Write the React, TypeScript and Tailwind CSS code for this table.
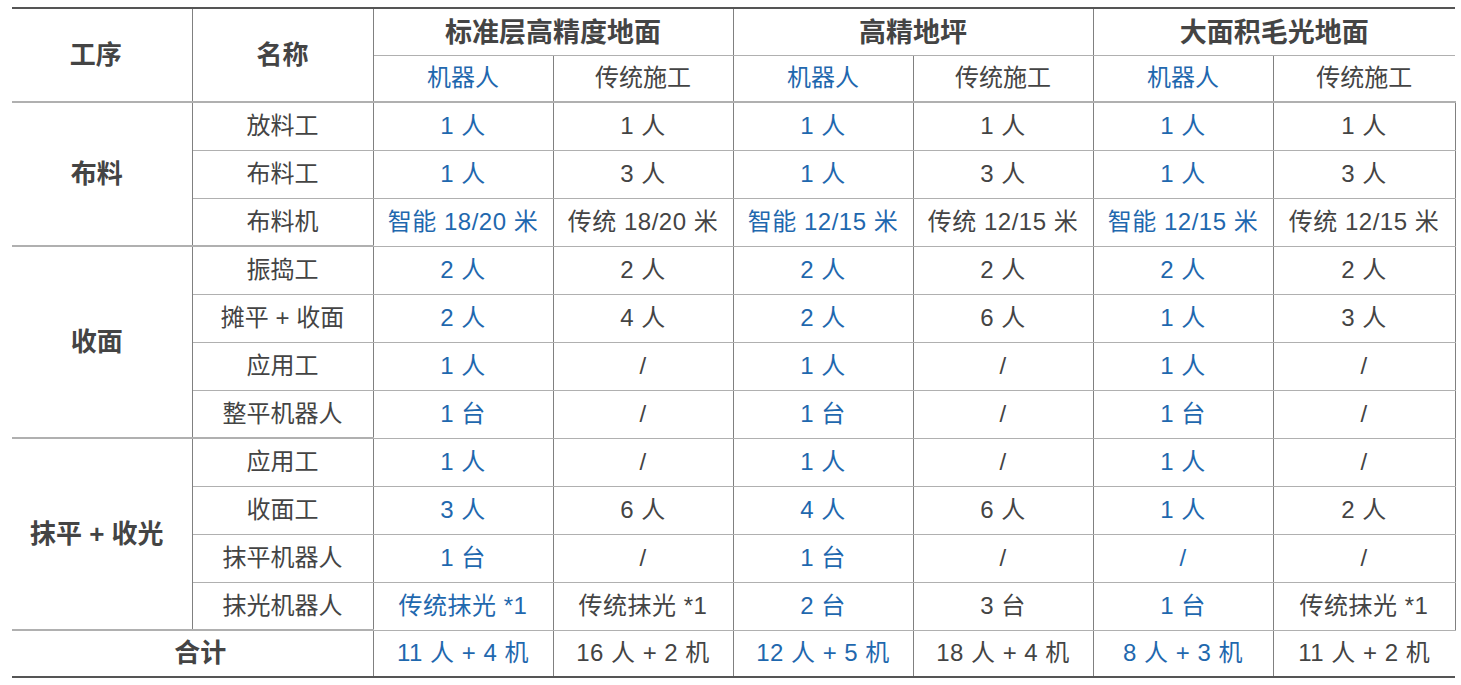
import React from 'react';

const FONT = { fontFamily: '"Liberation Sans", "Noto Sans CJK SC", sans-serif' };

type Cell = { t: string; blue?: boolean };

const b = (t: string): Cell => ({ t, blue: true });
const g = (t: string): Cell => ({ t });

const groups: { name: string; rows: { label: string; cells: Cell[] }[] }[] = [
  {
    name: '布料',
    rows: [
      { label: '放料工', cells: [b('1 人'), g('1 人'), b('1 人'), g('1 人'), b('1 人'), g('1 人')] },
      { label: '布料工', cells: [b('1 人'), g('3 人'), b('1 人'), g('3 人'), b('1 人'), g('3 人')] },
      {
        label: '布料机',
        cells: [b('智能 18/20 米'), g('传统 18/20 米'), b('智能 12/15 米'), g('传统 12/15 米'), b('智能 12/15 米'), g('传统 12/15 米')],
      },
    ],
  },
  {
    name: '收面',
    rows: [
      { label: '振捣工', cells: [b('2 人'), g('2 人'), b('2 人'), g('2 人'), b('2 人'), g('2 人')] },
      { label: '摊平 + 收面', cells: [b('2 人'), g('4 人'), b('2 人'), g('6 人'), b('1 人'), g('3 人')] },
      { label: '应用工', cells: [b('1 人'), g('/'), b('1 人'), g('/'), b('1 人'), g('/')] },
      { label: '整平机器人', cells: [b('1 台'), g('/'), b('1 台'), g('/'), b('1 台'), g('/')] },
    ],
  },
  {
    name: '抹平 + 收光',
    rows: [
      { label: '应用工', cells: [b('1 人'), g('/'), b('1 人'), g('/'), b('1 人'), g('/')] },
      { label: '收面工', cells: [b('3 人'), g('6 人'), b('4 人'), g('6 人'), b('1 人'), g('2 人')] },
      { label: '抹平机器人', cells: [b('1 台'), g('/'), b('1 台'), g('/'), b('/'), g('/')] },
      {
        label: '抹光机器人',
        cells: [b('传统抹光 *1'), g('传统抹光 *1'), b('2 台'), g('3 台'), b('1 台'), g('传统抹光 *1')],
      },
    ],
  },
];

const totals: Cell[] = [b('11 人 + 4 机'), g('16 人 + 2 机'), b('12 人 + 5 机'), g('18 人 + 4 机'), b('8 人 + 3 机'), g('11 人 + 2 机')];

const cellBase = 'border-x border-x-[#808080] border-y border-y-[#b0b0b0] text-center align-middle p-0';

function ValueCell({ c }: { c: Cell }) {
  return (
    <td className={`${cellBase} text-[24px] tracking-[0.5px] ${c.blue ? 'text-[#1f68ae]' : 'text-[#444444]'}`}>
      {c.t}
    </td>
  );
}

export default function App() {
  return (
    <div className="bg-white w-[1461px] h-[685px] pt-[7px] pl-[12px]" style={FONT}>
      <table className="table-fixed border-collapse w-[1443px] border-t-2 border-t-[#555555] border-b-2 border-b-[#555555]">
        <colgroup>
          <col className="w-[180px]" />
          <col className="w-[181px]" />
          <col className="w-[180px]" />
          <col className="w-[180px]" />
          <col className="w-[180px]" />
          <col className="w-[180px]" />
          <col className="w-[180px]" />
          <col className="w-[182px]" />
        </colgroup>
        <thead>
          <tr className="h-[47px]">
            <th rowSpan={2} className={`${cellBase} border-l-0 border-t-0 border-b-2 pr-[12px] text-[26px] font-bold text-[#444444]`}>
              工序
            </th>
            <th rowSpan={2} className={`${cellBase} border-t-0 border-b-2 text-[26px] font-bold text-[#444444]`}>
              名称
            </th>
            {['标准层高精度地面', '高精地坪', '大面积毛光地面'].map((h, i) => (
              <th
                key={h}
                colSpan={2}
                className={`${cellBase} border-t-0 pt-[3px] text-[27px] font-bold text-[#444444] ${i === 2 ? 'border-r-0' : ''}`}
              >
                {h}
              </th>
            ))}
          </tr>
          <tr className="h-[47px]">
            {[0, 1, 2].map((i) => (
              <React.Fragment key={i}>
                <th className={`${cellBase} border-b-2 font-normal text-[24px] text-[#1f68ae]`}>机器人</th>
                <th className={`${cellBase} border-b-2 font-normal text-[24px] text-[#444444] ${i === 2 ? 'border-r-0' : ''}`}>
                  传统施工
                </th>
              </React.Fragment>
            ))}
          </tr>
        </thead>
        <tbody>
          {groups.map((grp) =>
            grp.rows.map((row, ri) => (
              <tr key={grp.name + ri} className="h-[48px]">
                {ri === 0 && (
                  <td
                    rowSpan={grp.rows.length}
                    className={`${cellBase} border-l-0 border-b-2 pr-[10px] text-[26px] font-bold text-[#444444]`}
                  >
                    {grp.name}
                  </td>
                )}
                <td className={`${cellBase} text-[24px] text-[#444444] ${ri === grp.rows.length - 1 ? 'border-b-2' : ''}`}>
                  {row.label}
                </td>
                {row.cells.map((c, ci) => (
                  <ValueCell key={ci} c={c} />
                ))}
              </tr>
            ))
          )}
          <tr className="h-[47px]">
            <td colSpan={2} className={`${cellBase} border-l-0 border-b-0 pl-[16px] text-[26px] font-bold text-[#444444]`}>
              合计
            </td>
            {totals.map((c, ci) => (
              <td
                key={ci}
                className={`${cellBase} border-b-0 text-[24px] tracking-[0.5px] ${c.blue ? 'text-[#1f68ae]' : 'text-[#444444]'} ${ci === 5 ? 'border-r-0' : ''}`}
              >
                {c.t}
              </td>
            ))}
          </tr>
        </tbody>
      </table>
    </div>
  );
}
